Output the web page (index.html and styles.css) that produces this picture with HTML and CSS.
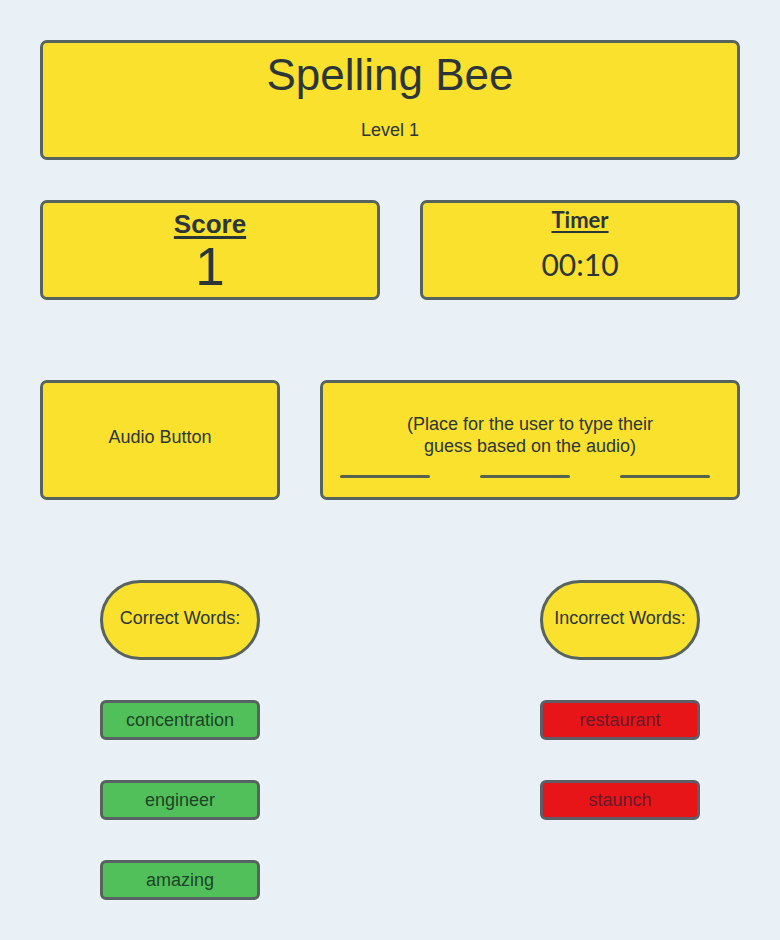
FILE: index.html
```html
<!DOCTYPE html>
<html lang="en">
<head>
<meta charset="utf-8">
<title>Spelling Bee</title>
<link rel="stylesheet" href="styles.css">
</head>
<body>
<main class="page">
  <header class="card title-card">
    <h1 class="title">Spelling Bee</h1>
    <p class="level">Level 1</p>
  </header>

  <section class="stats-row">
    <div class="card score-card">
      <h2 class="score-label">Score</h2>
      <div class="score-value">1</div>
    </div>
    <div class="card timer-card">
      <h2 class="timer-label">Timer</h2>
      <div class="timer-value">00:10</div>
    </div>
  </section>

  <section class="play-row">
    <div class="card audio-card">Audio Button</div>
    <div class="card guess-card">
      <p class="guess-text">(Place for the user to type their<br>guess based on the audio)</p>
      <div class="blanks">
        <span class="blank"></span>
        <span class="blank"></span>
        <span class="blank"></span>
      </div>
    </div>
  </section>

  <section class="words">
    <div class="word-col">
      <div class="pill">Correct Words:</div>
      <div class="word correct">concentration</div>
      <div class="word correct">engineer</div>
      <div class="word correct">amazing</div>
    </div>
    <div class="word-col">
      <div class="pill">Incorrect Words:</div>
      <div class="word incorrect">restaurant</div>
      <div class="word incorrect">staunch</div>
    </div>
  </section>
</main>
</body>
</html>
```

FILE: styles.css
```css
* { box-sizing: border-box; }

html, body {
  margin: 0;
  padding: 0;
  background: #e9f0f6;
}

body {
  font-family: "Liberation Sans", Arial, sans-serif;
  color: #2c3638;
}

.page {
  padding: 40px;
  width: 780px;
  display: flex;
  flex-direction: column;
}

.card {
  background: #f9e12e;
  border: 3px solid #57635f;
  border-radius: 7px;
}

.title-card {
  height: 120px;
  padding-top: 7px;
  text-align: center;
}

.title {
  margin: 0;
  font-size: 44px;
  line-height: 50px;
  font-weight: normal;
}

.level {
  margin: 19px 0 0;
  font-size: 18px;
  line-height: 22px;
}

.stats-row {
  margin-top: 40px;
  display: flex;
  gap: 40px;
}

.score-card {
  width: 340px;
  height: 100px;
  padding-top: 6px;
  text-align: center;
}

.score-label {
  margin: 0;
  font-size: 26px;
  line-height: 30px;
  font-weight: bold;
  text-decoration: underline;
  text-decoration-thickness: 3px;
  text-underline-offset: 3px;
}

.score-value {
  font-size: 53px;
  line-height: 56px;
}

.timer-card {
  width: 320px;
  height: 100px;
  padding-top: 4px;
  text-align: center;
  font-family: "Lato", "Liberation Sans", sans-serif;
}

.timer-label {
  margin: 0;
  font-size: 22px;
  line-height: 26px;
  font-weight: bold;
  text-decoration: underline;
  text-decoration-thickness: 2px;
  text-underline-offset: 3px;
}

.timer-value {
  margin-top: 13px;
  font-size: 30px;
  line-height: 36px;
}

.play-row {
  margin-top: 80px;
  display: flex;
  gap: 40px;
}

.audio-card {
  width: 240px;
  height: 120px;
  display: flex;
  align-items: center;
  justify-content: center;
  padding-bottom: 6px;
  font-size: 18px;
}

.guess-card {
  width: 420px;
  height: 120px;
  padding: 30px 0 0 17px;
}

.guess-text {
  margin: 0;
  padding-right: 17px;
  text-align: center;
  font-size: 18px;
  line-height: 22px;
}

.blanks {
  margin-top: 18px;
  display: flex;
  gap: 50px;
}

.blank {
  width: 90px;
  height: 3px;
  border-radius: 2px;
  background: #55634f;
}

.words {
  margin-top: 80px;
  padding: 0 40px 0 60px;
  display: flex;
  justify-content: space-between;
}

.word-col {
  width: 160px;
  display: flex;
  flex-direction: column;
  gap: 40px;
}

.pill {
  height: 80px;
  background: #f9e12e;
  border: 3px solid #57635f;
  border-radius: 40px;
  display: flex;
  align-items: center;
  justify-content: center;
  padding-bottom: 4px;
  font-size: 18px;
}

.word {
  height: 40px;
  border: 3px solid #57635f;
  border-radius: 6px;
  display: flex;
  align-items: center;
  justify-content: center;
  font-size: 18px;
}

.correct {
  background: #52c05a;
  color: #1c4428;
}

.incorrect {
  background: #e81518;
  color: #661a2c;
  border-color: #5e5f66;
}
```
